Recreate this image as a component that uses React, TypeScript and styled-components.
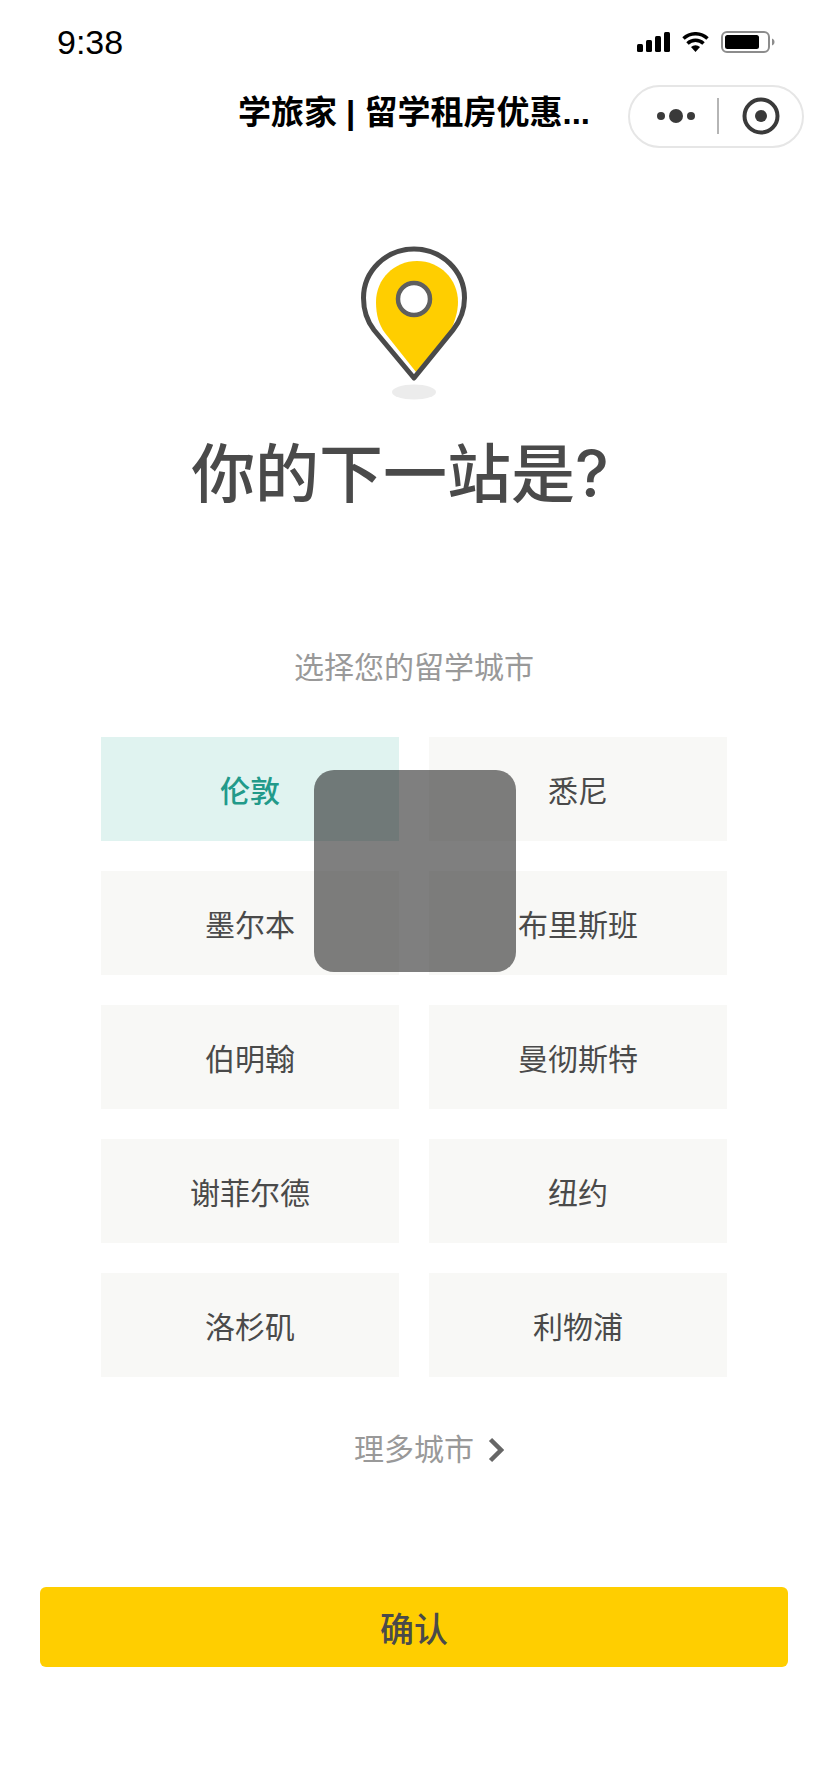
import React from 'react';
import styled, { createGlobalStyle } from 'styled-components';

const GlobalStyle = createGlobalStyle`
  html, body {
    margin: 0;
    padding: 0;
    background: #fff;
  }
  * {
    box-sizing: border-box;
  }
`;

const CJK = `'Liberation Sans', 'Noto Sans CJK SC', 'Noto Sans', sans-serif`;

const Page = styled.div`
  width: 828px;
  height: 1792px;
  position: relative;
  overflow: hidden;
  display: flex;
  flex-direction: column;
  align-items: center;
  background: #fff;
  font-family: ${CJK};
  color: #4a4a4a;
`;

const StatusBar = styled.div`
  width: 100%;
  height: 84px;
  padding: 22px 53px 0 57px;
  display: flex;
  justify-content: space-between;
  align-items: flex-start;
`;

const Clock = styled.span`
  font-family: 'Liberation Sans', Arial, sans-serif;
  font-size: 34px;
  line-height: 40px;
  color: #000;
`;

const StatusIcons = styled.div`
  display: flex;
  align-items: center;
  gap: 12px;
  height: 40px;
`;

const NavBar = styled.div`
  width: 100%;
  height: 64px;
  padding-right: 24px;
  display: flex;
  align-items: center;
  justify-content: flex-end;
`;

const NavTitle = styled.div`
  font-size: 33px;
  line-height: 44px;
  font-weight: 700;
  color: #000;
  white-space: nowrap;
  margin: -7px 38px 0 0;
`;

const Capsule = styled.div`
  width: 176px;
  height: 63px;
  border: 2px solid #e6e6e6;
  border-radius: 32px;
  display: flex;
  align-items: center;
  background: #fff;
`;

const CapsuleSlot = styled.div<{ $first?: boolean }>`
  flex: 1;
  padding-left: ${p => (p.$first ? '4px' : '0')};
  display: flex;
  align-items: center;
  justify-content: center;
`;

const CapsuleDivider = styled.div`
  width: 2px;
  height: 36px;
  background: #b5b5b5;
`;

const PinIcon = styled.svg`
  display: block;
  margin-top: 97px;
  flex: none;
`;

const Title = styled.h1`
  margin: 28px 28px 0 0;
  font-family: Inter, 'Noto Sans CJK SC', sans-serif;
  font-size: 64px;
  line-height: 90px;
  font-weight: 500;
  color: #4a4a4a;
`;

const Subtitle = styled.p`
  margin: 127px 0 0;
  font-size: 30px;
  line-height: 44px;
  color: #999;
`;

const CityGrid = styled.div`
  margin-top: 47px;
  width: 626px;
  display: grid;
  grid-template-columns: 298px 298px;
  grid-auto-rows: 104px;
  gap: 30px;
`;

const CityCell = styled.div<{ $active?: boolean }>`
  display: flex;
  align-items: center;
  justify-content: center;
  font-size: 30px;
  font-weight: ${p => (p.$active ? 500 : 400)};
  background: ${p => (p.$active ? '#e0f3f0' : '#f8f8f6')};
  color: ${p => (p.$active ? '#229a8a' : '#4a4a4a')};
`;

const MoreCities = styled.div`
  margin: 51px 0 0 30px;
  display: flex;
  align-items: center;
  gap: 14px;
  font-size: 30px;
  line-height: 44px;
  color: #999;
`;

const ConfirmButton = styled.button`
  margin-top: 115px;
  width: 748px;
  height: 80px;
  border: none;
  border-radius: 6px;
  background: #ffce00;
  color: #4a4a4a;
  font-family: ${CJK};
  font-size: 34px;
  font-weight: 500;
`;

// empty loading toast sitting over the grid
const Toast = styled.div`
  position: absolute;
  left: 314px;
  top: 770px;
  width: 202px;
  height: 202px;
  border-radius: 20px;
  background: rgba(0, 0, 0, 0.5);
`;

const cities = ['伦敦', '悉尼', '墨尔本', '布里斯班', '伯明翰', '曼彻斯特', '谢菲尔德', '纽约', '洛杉矶', '利物浦'];

const App = () => (
  <Page>
    <GlobalStyle />
    <StatusBar>
      <Clock>9:38</Clock>
      <StatusIcons>
        <svg width="33" height="20" viewBox="0 0 33 20">
          <rect x="0" y="12" width="6" height="8" rx="1.5" fill="#000" />
          <rect x="9" y="8" width="6" height="12" rx="1.5" fill="#000" />
          <rect x="18" y="4" width="6" height="16" rx="1.5" fill="#000" />
          <rect x="27" y="0" width="6" height="20" rx="1.5" fill="#000" />
        </svg>
        <svg width="27" height="20" viewBox="0 0 27 20">
          <path d="M13.5 20 L9 15 A7 7 0 0 1 18 15 Z" fill="#000" />
          <path d="M5.5 11.5 A11.5 11.5 0 0 1 21.5 11.5" fill="none" stroke="#000" strokeWidth="3.5" />
          <path d="M1.5 6.5 A17.5 17.5 0 0 1 25.5 6.5" fill="none" stroke="#000" strokeWidth="3.5" />
        </svg>
        <svg width="54" height="22" viewBox="0 0 54 22">
          <rect x="1" y="1" width="47" height="20" rx="5" fill="none" stroke="#8c8c8c" strokeWidth="2" />
          <rect x="4" y="4" width="34" height="14" rx="2.5" fill="#000" />
          <path d="M51 7.5 C53 8.5 53.5 9.5 53.5 11 C53.5 12.5 53 13.5 51 14.5 Z" fill="#8c8c8c" />
        </svg>
      </StatusIcons>
    </StatusBar>

    <NavBar>
      <NavTitle>学旅家 | 留学租房优惠...</NavTitle>
      <Capsule>
        <CapsuleSlot $first>
          <svg width="38" height="16" viewBox="0 0 38 16">
            <circle cx="4" cy="8" r="4" fill="#3a3a3a" />
            <circle cx="19" cy="8" r="7" fill="#3a3a3a" />
            <circle cx="34" cy="8" r="4" fill="#3a3a3a" />
          </svg>
        </CapsuleSlot>
        <CapsuleDivider />
        <CapsuleSlot>
          <svg width="38" height="38" viewBox="0 0 38 38">
            <circle cx="19" cy="19" r="16.5" fill="none" stroke="#3a3a3a" strokeWidth="4" />
            <circle cx="19" cy="19" r="6" fill="#3a3a3a" />
          </svg>
        </CapsuleSlot>
      </Capsule>
    </NavBar>

    <PinIcon width="110" height="156" viewBox="0 0 110 156">
      <path
        d="M57 127 L26 88 C20 80 17 70 17 57 C17 34 35 16 58 16 C81 16 99 34 99 57 C99 66 96 76 92 85 Z"
        fill="#ffce00"
      />
      <path
        d="M55 133 L15 85 C8 76 4.5 64 4.5 53 C4.5 26 27 4 55 4 C83 4 105.5 26 105.5 53 C105.5 64 101 76 94 85 Z"
        fill="none"
        stroke="#4a4a4a"
        strokeWidth="5"
        strokeLinejoin="round"
      />
      <circle cx="55" cy="54" r="16" fill="#fff" stroke="#5f5f5f" strokeWidth="4.5" />
      <ellipse cx="55" cy="147" rx="22" ry="7.5" fill="#ececec" />
    </PinIcon>

    <Title>你的下一站是?</Title>
    <Subtitle>选择您的留学城市</Subtitle>

    <CityGrid>
      {cities.map((city, i) => (
        <CityCell key={city} $active={i === 0}>
          {city}
        </CityCell>
      ))}
    </CityGrid>

    <MoreCities>
      理多城市
      <svg width="16" height="26" viewBox="0 0 16 26">
        <path d="M2.5 2.5 L13 13 L2.5 23.5" fill="none" stroke="#666" strokeWidth="4.5" />
      </svg>
    </MoreCities>

    <ConfirmButton>确认</ConfirmButton>

    <Toast />
  </Page>
);

export default App;
